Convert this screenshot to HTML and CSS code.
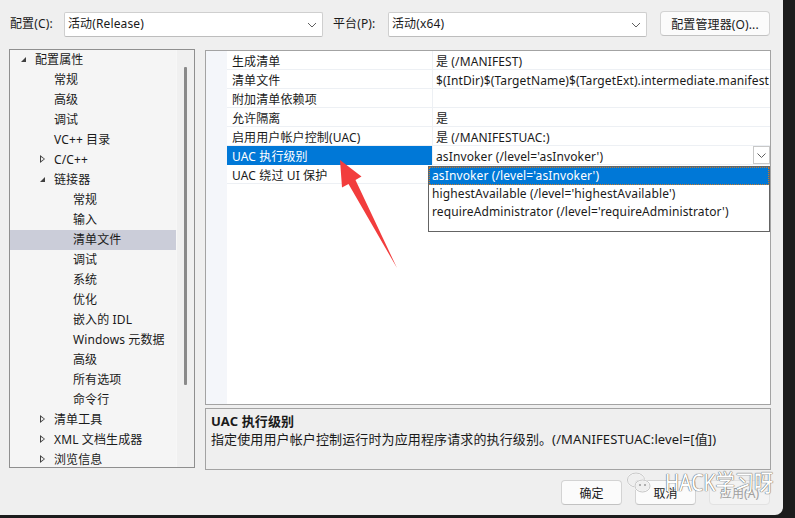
FILE: index.html
```html
<!DOCTYPE html>
<html lang="zh-CN">
<head>
<meta charset="utf-8">
<title>清单文件 属性页</title>
<link rel="stylesheet" href="styles.css">
</head>
<body>
<div class="dialog">
  <div class="toolbar">
    <span class="lbl lbl1">配置(C):</span>
    <div class="combo">活动(Release)<svg class="chev" width="10" height="6" viewBox="0 0 10 6"><polyline points="1,1 5,5 9,1" fill="none" stroke="#606060" stroke-width="1"/></svg></div>
    <span class="lbl lbl2">平台(P):</span>
    <div class="combo">活动(x64)<svg class="chev" width="10" height="6" viewBox="0 0 10 6"><polyline points="1,1 5,5 9,1" fill="none" stroke="#606060" stroke-width="1"/></svg></div>
    <button class="btn mgr">配置管理器(O)...</button>
  </div>

  <div class="main">
    <div class="tree">
      <div class="tree-list">
        <div class="node l0"><span class="exp open"></span>配置属性</div>
        <div class="node l1"><span class="exp"></span>常规</div>
        <div class="node l1"><span class="exp"></span>高级</div>
        <div class="node l1"><span class="exp"></span>调试</div>
        <div class="node l1"><span class="exp"></span>VC++ 目录</div>
        <div class="node l1"><span class="exp closed"></span>C/C++</div>
        <div class="node l1"><span class="exp open"></span>链接器</div>
        <div class="node l2"><span class="exp"></span>常规</div>
        <div class="node l2"><span class="exp"></span>输入</div>
        <div class="node l2 sel"><span class="exp"></span>清单文件</div>
        <div class="node l2"><span class="exp"></span>调试</div>
        <div class="node l2"><span class="exp"></span>系统</div>
        <div class="node l2"><span class="exp"></span>优化</div>
        <div class="node l2"><span class="exp"></span>嵌入的 IDL</div>
        <div class="node l2"><span class="exp"></span>Windows 元数据</div>
        <div class="node l2"><span class="exp"></span>高级</div>
        <div class="node l2"><span class="exp"></span>所有选项</div>
        <div class="node l2"><span class="exp"></span>命令行</div>
        <div class="node l1"><span class="exp closed"></span>清单工具</div>
        <div class="node l1"><span class="exp closed"></span>XML 文档生成器</div>
        <div class="node l1"><span class="exp closed"></span>浏览信息</div>
      </div>
      <div class="track"><div class="thumb"></div></div>
    </div>

    <div class="right">
      <div class="grid">
        <div class="row"><div class="gut"></div><div class="name">生成清单</div><div class="val">是 (/MANIFEST)</div></div>
        <div class="row"><div class="gut"></div><div class="name">清单文件</div><div class="val">$(IntDir)$(TargetName)$(TargetExt).intermediate.manifest</div></div>
        <div class="row"><div class="gut"></div><div class="name">附加清单依赖项</div><div class="val"></div></div>
        <div class="row"><div class="gut"></div><div class="name">允许隔离</div><div class="val">是</div></div>
        <div class="row"><div class="gut"></div><div class="name">启用用户帐户控制(UAC)</div><div class="val">是 (/MANIFESTUAC:)</div></div>
        <div class="row"><div class="gut"></div><div class="name active">UAC 执行级别</div><div class="val">asInvoker (/level='asInvoker')<span class="ddbtn"><svg width="9" height="5" viewBox="0 0 9 5"><polyline points="0.5,0.5 4.5,4.5 8.5,0.5" fill="none" stroke="#606060" stroke-width="1"/></svg></span></div></div>
        <div class="row"><div class="gut"></div><div class="name">UAC 绕过 UI 保护</div><div class="val"></div></div>
        <div class="grid-rest"><div class="gut"></div></div>

        <div class="dropdown">
          <div class="opt hl">asInvoker (/level='asInvoker')</div>
          <div class="opt">highestAvailable (/level='highestAvailable')</div>
          <div class="opt">requireAdministrator (/level='requireAdministrator')</div>
        </div>
      </div>
      <div class="desc">
        <div class="desc-title">UAC 执行级别</div>
        <div class="desc-text">指定使用用户帐户控制运行时为应用程序请求的执行级别。(/MANIFESTUAC:level=[值])</div>
      </div>
    </div>
  </div>

  <div class="footer">
    <button class="btn">确定</button>
    <button class="btn">取消</button>
    <button class="btn disabled">应用(A)</button>
  </div>

  <svg class="arrow" width="795" height="518" viewBox="0 0 795 518">
    <polygon points="340,160 361.5,176.5 355.5,180 397,268 348.5,184 342,187.5" fill="#f23d3d"/>
  </svg>

  <div class="watermark">
    <svg class="wm-icon" width="26" height="24" viewBox="0 0 26 24">
      <ellipse cx="10" cy="9" rx="8.5" ry="7" fill="none" stroke="#ffffff" stroke-width="1.6"/>
      <ellipse cx="10" cy="9" rx="8.5" ry="7" fill="none" stroke="#9a9a9a" stroke-width="0.6"/>
      <ellipse cx="16.5" cy="15" rx="7.5" ry="6" fill="#efefef" stroke="#ffffff" stroke-width="1.6"/>
      <ellipse cx="16.5" cy="15" rx="7.5" ry="6" fill="none" stroke="#9a9a9a" stroke-width="0.6"/>
      <circle cx="14" cy="14" r="1" fill="#9a9a9a"/>
      <circle cx="19" cy="14" r="1" fill="#9a9a9a"/>
    </svg>
    <span class="wm-text">HACK学习呀</span>
  </div>
</div>
</body>
</html>
```

FILE: styles.css
```css
* { box-sizing: border-box; }

html, body {
  margin: 0;
  padding: 0;
}

body {
  background: #1c1c1c;
  width: 795px;
  height: 518px;
  overflow: hidden;
  font-family: "Noto Sans", "Noto Sans CJK SC", sans-serif;
  font-size: 12px;
  letter-spacing: 0.12px;
  color: #1a1a1a;
}

.dialog {
  position: relative;
  width: 783px;
  height: 515px;
  background: #efefef;
  border-bottom-right-radius: 8px;
  display: flex;
  flex-direction: column;
}

/* toolbar */
.toolbar {
  height: 49px;
  display: flex;
  align-items: flex-start;
  padding-top: 11px;
  padding-left: 10px;
}

.lbl {
  line-height: 25px;
}
.lbl1 { width: 54px; }
.lbl2 { width: 55px; margin-left: 10px; }

.combo {
  position: relative;
  width: 259px;
  height: 25px;
  margin-top: 1px;
  background: #ffffff;
  border: 1px solid #cfcfcf;
  border-bottom-color: #bdbdbd;
  border-radius: 2px;
  padding-left: 3px;
  line-height: 22px;
}

.chev {
  position: absolute;
  right: 5px;
  top: 9px;
}

.btn {
  font-family: inherit;
  font-size: 12px;
  letter-spacing: 0.12px;
  color: #1a1a1a;
  height: 25px;
  width: 61px;
  background: #fbfbfb;
  border: 1px solid #d3d3d3;
  border-bottom-color: #c2c2c2;
  border-radius: 4px;
  padding: 0;
}

.mgr {
  width: 110px;
  margin-left: 13px;
}

/* main */
.main {
  display: flex;
  align-items: flex-start;
  padding-left: 9px;
}

.tree {
  width: 186px;
  height: 419px;
  border: 1px solid #8f8f8f;
  background: #f5f5f5;
  display: flex;
  overflow: hidden;
}

.tree-list {
  width: 166px;
  display: flex;
  flex-direction: column;
}

.node {
  height: 20px;
  flex: 0 0 20px;
  display: flex;
  align-items: center;
  white-space: nowrap;
  line-height: 20px;
}
.node.l0 { padding-left: 0; }
.node.l1 { padding-left: 19px; }
.node.l2 { padding-left: 38px; }
.node.sel { background: #cbcdd9; }

.exp {
  position: relative;
  width: 25px;
  height: 20px;
  flex: 0 0 25px;
}
.exp.open::before {
  content: "";
  position: absolute;
  left: 11px;
  top: 7px;
  width: 0;
  height: 0;
  border-style: solid;
  border-width: 0 0 5px 5px;
  border-color: transparent transparent #404040 transparent;
}
.exp.closed::before {
  content: "";
  position: absolute;
  left: 11px;
  top: 5px;
  width: 0;
  height: 0;
  border-style: solid;
  border-width: 4.5px 0 4.5px 5px;
  border-color: transparent transparent transparent #404040;
}
.exp.closed::after {
  content: "";
  position: absolute;
  left: 11.5px;
  top: 7px;
  width: 0;
  height: 0;
  border-style: solid;
  border-width: 2.5px 0 2.5px 3px;
  border-color: transparent transparent transparent #f5f5f5;
}

.track {
  width: 18px;
  background: #f0f0f0;
  position: relative;
  border-left: 1px solid #f7f7f7;
}
.thumb {
  position: absolute;
  left: 7px;
  top: 17px;
  width: 3px;
  height: 318px;
  background: #8a8a8a;
  border-radius: 1px;
}

/* right */
.right {
  margin-left: 10px;
  margin-top: 1px;
  width: 566px;
  display: flex;
  flex-direction: column;
}

.grid {
  position: relative;
  height: 355px;
  border: 1px solid #a3a3a3;
  background: #ffffff;
  display: flex;
  flex-direction: column;
}

.row {
  display: flex;
  height: 19px;
  flex: 0 0 19px;
}

.gut {
  width: 21px;
  flex: 0 0 21px;
  background: #f4f6fa;
}

.name {
  width: 205px;
  flex: 0 0 205px;
  border-bottom: 1px solid #edf0f4;
  padding-left: 5px;
  padding-top: 2px;
  line-height: 18px;
  white-space: nowrap;
}
.name.active {
  background: #0078d7;
  color: #ffffff;
  border-bottom-color: #0078d7;
}

.val {
  position: relative;
  flex: 1;
  min-width: 0;
  border-left: 1px solid #edf0f4;
  border-bottom: 1px solid #edf0f4;
  padding-left: 3px;
  padding-top: 2px;
  line-height: 18px;
  white-space: nowrap;
  overflow-x: clip;
}

.ddbtn {
  position: absolute;
  right: 0;
  top: 0;
  width: 17px;
  height: 18px;
  border: 1px solid #c8c8c8;
  background: #ffffff;
  display: flex;
  align-items: center;
  justify-content: center;
}

.grid-rest {
  flex: 1;
  display: flex;
}

.dropdown {
  position: absolute;
  left: 222px;
  top: 115px;
  width: 342px;
  height: 66px;
  background: #ffffff;
  border: 1px solid #646464;
  padding: 0;
}

.opt {
  height: 18px;
  line-height: 18px;
  padding-left: 3px;
  white-space: nowrap;
}
.opt.hl {
  background: #0078d7;
  color: #ffffff;
  outline: 1px dotted #c87a2a;
  outline-offset: -1px;
}

.desc {
  margin-top: 3px;
  height: 62px;
  border: 1px solid #a3a3a3;
  background: #efefef;
  padding: 3px 5px;
  font-size: 13px;
}
.desc-title {
  font-weight: bold;
  line-height: 18px;
}
.desc-text {
  line-height: 18px;
  white-space: nowrap;
}

/* footer */
.footer {
  display: flex;
  justify-content: flex-end;
  gap: 13px;
  padding-right: 13px;
  margin-top: 10px;
}
.btn.disabled {
  color: #a0a0a0;
  background: #f3f3f3;
  border-color: #e2e2e2;
}

/* overlays */
.arrow {
  position: absolute;
  left: 0;
  top: 0;
  pointer-events: none;
}

.watermark {
  position: absolute;
  left: 626px;
  top: 469px;
  display: flex;
  align-items: center;
  gap: 13px;
  white-space: nowrap;
  pointer-events: none;
}
.wm-icon {
  flex: 0 0 auto;
  margin-top: 2px;
}
.wm-text {
  display: inline-block;
  flex: 0 0 auto;
  white-space: nowrap;
  font-size: 23px;
  line-height: 26px;
  letter-spacing: 0;
  color: #ffffff;
  transform: scaleX(0.84);
  transform-origin: left center;
  text-shadow: 0 0 1px #6e6e6e, 0 0 1px #6e6e6e, 0 0 1px #6e6e6e;
}
```
